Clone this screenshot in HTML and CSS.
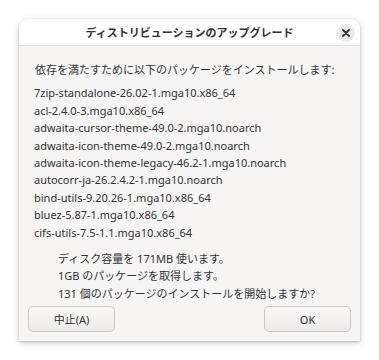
FILE: index.html
```html
<!DOCTYPE html>
<html lang="ja">
<head>
    <meta charset="UTF-8">
    <meta name="viewport" content="width=device-width, initial-scale=1.0">
    <title>ディストリビューションのアップグレード</title>
    <link rel="stylesheet" href="styles.css">
</head>
<body>
    <div class="dialog">
        <header class="titlebar">
            <h1>ディストリビューションのアップグレード</h1>
            <button class="close" type="button" aria-label="閉じる">
                <svg width="8" height="8" viewBox="0 0 8 8">
                    <path d="M1 1 L7 7 M7 1 L1 7" stroke="#2e3436" stroke-width="1.8" stroke-linecap="round"/>
                </svg>
            </button>
        </header>

        <section class="content">
            <p class="intro">依存を満たすために以下のパッケージをインストールします:</p>
            <ul class="packages">
                <li>7zip-standalone-26.02-1.mga10.x86_64</li>
                <li>acl-2.4.0-3.mga10.x86_64</li>
                <li>adwaita-cursor-theme-49.0-2.mga10.noarch</li>
                <li>adwaita-icon-theme-49.0-2.mga10.noarch</li>
                <li>adwaita-icon-theme-legacy-46.2-1.mga10.noarch</li>
                <li>autocorr-ja-26.2.4.2-1.mga10.noarch</li>
                <li>bind-utils-9.20.26-1.mga10.x86_64</li>
                <li>bluez-5.87-1.mga10.x86_64</li>
                <li>cifs-utils-7.5-1.1.mga10.x86_64</li>
            </ul>
            <div class="summary">
                <p>ディスク容量を 171MB 使います。</p>
                <p>1GB のパッケージを取得します。</p>
                <p>131 個のパッケージのインストールを開始しますか?</p>
            </div>
            <div class="actions">
                <button type="button">中止(A)</button>
                <button type="button">OK</button>
            </div>
        </section>
    </div>
</body>
</html>
```

FILE: styles.css
```css
body {
    margin: 0;
    padding: 19px;
    background-color: #fff;
    font-family: "Noto Sans", "Noto Sans CJK JP", sans-serif;
    color: #2e3436;
}

.dialog {
    width: 341px;
    height: 322px;
    display: flex;
    flex-direction: column;
    background-color: #f6f5f4;
    border-radius: 9px 9px 0 0;
    box-shadow: 0 1px 3px rgba(0, 0, 0, 0.25), 0 2px 10px rgba(0, 0, 0, 0.12);
    overflow: hidden;
}

.titlebar {
    height: 26px;
    display: flex;
    align-items: center;
    justify-content: center;
    position: relative;
    background-color: #fff;
    border-bottom: 1px solid #e4e2e0;
}

.titlebar h1 {
    margin: 0;
    font-size: 11px;
    font-weight: bold;
}

.close {
    position: absolute;
    right: 5px;
    top: 5px;
    width: 18px;
    height: 18px;
    padding: 0;
    border: none;
    border-radius: 50%;
    background-color: #ebebeb;
    display: flex;
    align-items: center;
    justify-content: center;
}

.content {
    flex: 1;
    display: flex;
    flex-direction: column;
    padding: 15px 9px 9px;
    font-size: 11px;
    line-height: 17.4px;
}

.intro {
    margin: 0 0 6px 7px;
}

.packages {
    list-style: none;
    margin: 0 0 9px;
    padding: 0 0 0 6px;
}

.summary {
    padding-left: 30px;
}

.summary p {
    margin: 0;
}

.actions {
    margin-top: auto;
    display: flex;
    justify-content: space-between;
}

.actions button {
    width: 87px;
    height: 26px;
    font-family: inherit;
    font-size: 11px;
    color: #2e3436;
    background: linear-gradient(#f8f7f6, #edebe9);
    border: 1px solid #cdc7c2;
    border-radius: 5px;
}
```
